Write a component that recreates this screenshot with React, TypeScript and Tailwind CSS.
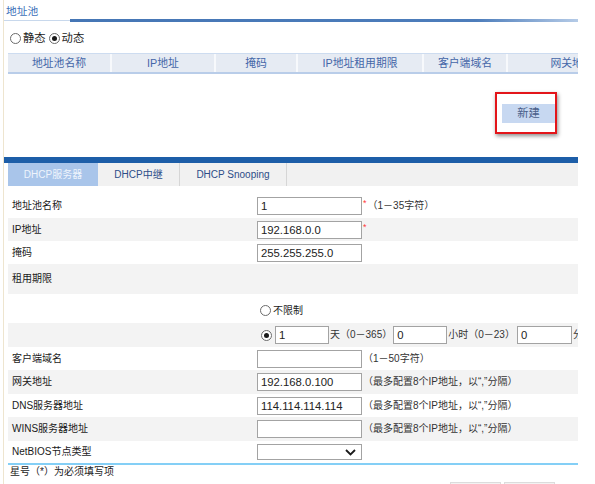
import React from "react";

const F = "font-['Liberation_Sans','Noto_Sans_CJK_SC',sans-serif]";

function Radio({ checked }: { checked?: boolean }) {
  return (
    <span className="flex h-[11px] w-[11px] shrink-0 items-center justify-center rounded-full border border-[#6b6b6b] bg-white">
      {checked && <span className="h-[5px] w-[5px] rounded-full bg-[#1a1a1a]" />}
    </span>
  );
}

function Box({ w, children }: { w: string; children?: React.ReactNode }) {
  return (
    <div
      className={`${w} h-[18px] shrink-0 overflow-hidden whitespace-nowrap border border-[#a3a3a3] bg-white px-[3px] text-[11.3px] leading-[16px] text-[#222]`}
    >
      {children}
    </div>
  );
}

function Row({
  label,
  gray,
  h,
  children,
}: {
  label?: string;
  gray?: boolean;
  h: string;
  children?: React.ReactNode;
}) {
  return (
    <div className={`flex items-center ${h} ${gray ? "bg-[#f3f3f3]" : "bg-white"}`}>
      <div className="w-[249px] shrink-0 pl-[4px] text-[10px] leading-[12px] text-[#1a1a1a]">{label}</div>
      <div className="flex min-w-0 flex-1 items-center overflow-hidden">{children}</div>
    </div>
  );
}

function Hint({ children }: { children: React.ReactNode }) {
  return <span className="ml-[1px] shrink-0 whitespace-nowrap text-[10px] leading-[12px] text-[#333]">{children}</span>;
}

const cols: [string, string][] = [
  ["地址池名称", "w-[104px]"],
  ["IP地址", "w-[104px]"],
  ["掩码", "w-[82px]"],
  ["IP地址租用期限", "w-[126px]"],
  ["客户端域名", "w-[84px]"],
  ["网关地址", "w-[128px]"],
];

export default function App() {
  return (
    <div className={`relative h-[484px] w-[595px] overflow-hidden bg-white ${F}`}>
      <div className="ml-[3px] h-full w-[575px] border-l border-[#eee5cf]">
        {/* title */}
        <div className="h-[19px] pl-[2px] pt-[5px] text-[10.7px] leading-[12px] text-[#3d70b8]">地址池</div>
        <div className="flex h-[4px] items-start">
          <div className="mt-[1px] h-[1px] w-[66px] bg-[#c8d8ec]" />
          <div className="h-[3px] flex-1 bg-[linear-gradient(to_right,#4576b5_0%,#4d7dbb_80%,#b5cbe7_100%)]" />
        </div>
        {/* radio row */}
        <div className="flex h-[30px] items-center pl-[6px] text-[11.3px] leading-[13px] text-[#1a1a1a]">
          <Radio />
          <span className="ml-[2px]">静态</span>
          <span className="ml-[3px]">
            <Radio checked />
          </span>
          <span className="ml-[2px]">动态</span>
        </div>
        {/* table header */}
        <div className="ml-[4px] flex h-[21px] w-[570px] overflow-hidden border-b-2 border-t border-b-[#b9cde9] border-t-[#cddcf0] bg-[#e6ebf3]">
          {cols.map(([t, w], i) => (
            <div
              key={t}
              className={`${w} flex shrink-0 items-center justify-center whitespace-nowrap text-[10.8px] text-[#4466a8] ${
                i < cols.length - 1 ? "border-r-2 border-r-[#f7f9fc]" : ""
              }`}
            >
              {t}
            </div>
          ))}
        </div>
        {/* button area */}
        <div className="flex h-[83px] justify-end pr-[23px] pt-[30px]">
          <div className="relative h-[19px] w-[53px]">
            <div className="flex h-full w-full items-center justify-center bg-[#c7d8f1] text-[11.3px] text-[#4a5f8a]">新建</div>
            <div className="absolute -bottom-[11px] -left-[7px] -right-[2px] -top-[12px] border-2 border-[#e3151a] shadow-[1px_2px_4px_rgba(0,0,0,0.45)]" />
          </div>
        </div>
        {/* dark bar */}
        <div className="h-[6px] bg-[#1d5ea8]" />
        {/* tabs */}
        <div className="ml-[4px] flex h-[23px] w-[570px] bg-[#f1f1f1] text-[10px]">
          <div className="flex w-[90px] items-center justify-center bg-[#a9c5ea] text-[#eef4fc]">DHCP服务器</div>
          <div className="flex w-[82px] items-center justify-center border-r border-[#d6d6d6] text-[#2d4d88]">DHCP中继</div>
          <div className="flex w-[107px] items-center justify-center border-r border-[#d6d6d6] text-[#2d4d88]">DHCP Snooping</div>
        </div>
        {/* form */}
        <div className="ml-[4px] w-[570px] overflow-hidden">
          <div className="h-[8px]" />
          <Row label="地址池名称" h="h-[24px]">
            <Box w="w-[105px]">1</Box>
            <span className="ml-[1px] self-start pt-[2px] text-[9px] leading-[9px] text-[#ff3b3b]">*</span>
            <Hint>（1－35字符）</Hint>
          </Row>
          <Row label="IP地址" gray h="h-[23px]">
            <Box w="w-[105px]">192.168.0.0</Box>
            <span className="ml-[1px] self-start pt-[2px] text-[9px] leading-[9px] text-[#ff3b3b]">*</span>
          </Row>
          <Row label="掩码" h="h-[23px]">
            <Box w="w-[105px]">255.255.255.0</Box>
          </Row>
          <Row label="租用期限" gray h="h-[30px]" />
          <Row h="h-[29px]">
            <span className="ml-[3px] flex items-center pt-[3px]">
              <Radio />
              <span className="ml-[2px] text-[10px] text-[#1a1a1a]">不限制</span>
            </span>
          </Row>
          <Row gray h="h-[24px]">
            <span className="ml-[4px]">
              <Radio checked />
            </span>
            <span className="ml-[3px]">
              <Box w="w-[54px]">1</Box>
            </span>
            <Hint>天（0－365）</Hint>
            <span className="ml-[1px]">
              <Box w="w-[54px]">0</Box>
            </span>
            <Hint>小时（0－23）</Hint>
            <span className="ml-[2px]">
              <Box w="w-[55px]">0</Box>
            </span>
            <Hint>分钟</Hint>
          </Row>
          <Row label="客户端域名" h="h-[23px]">
            <Box w="w-[105px]" />
            <Hint>（1－50字符）</Hint>
          </Row>
          <Row label="网关地址" gray h="h-[24px]">
            <Box w="w-[105px]">192.168.0.100</Box>
            <Hint>（最多配置8个IP地址，以“,”分隔）</Hint>
          </Row>
          <Row label="DNS服务器地址" h="h-[23px]">
            <Box w="w-[105px]">114.114.114.114</Box>
            <Hint>（最多配置8个IP地址，以“,”分隔）</Hint>
          </Row>
          <Row label="WINS服务器地址" gray h="h-[24px]">
            <Box w="w-[105px]" />
            <Hint>（最多配置8个IP地址，以“,”分隔）</Hint>
          </Row>
          <Row label="NetBIOS节点类型" h="h-[22px]">
            <div className="flex h-[16px] w-[105px] items-center justify-end border border-[#a3a3a3] bg-white pr-[5px]">
              <svg width="11" height="7" viewBox="0 0 11 7">
                <polyline points="1,1 5.5,5.5 10,1" fill="none" stroke="#1a1a1a" strokeWidth="1.8" />
              </svg>
            </div>
          </Row>
          <div className="h-[2px] bg-[#84cff6]" />
          <div className="flex h-[12px] items-center pl-[2px] text-[10px] text-[#1a1a1a]">星号（*）为必须填写项</div>
          <div className="mt-[5px] flex justify-end gap-[3px] pr-[23px]">
            <div className="h-[20px] w-[51px] border border-[#dcdcdc] bg-[#f2f2f2]" />
            <div className="h-[20px] w-[51px] border border-[#dcdcdc] bg-[#f2f2f2]" />
          </div>
        </div>
      </div>
    </div>
  );
}
